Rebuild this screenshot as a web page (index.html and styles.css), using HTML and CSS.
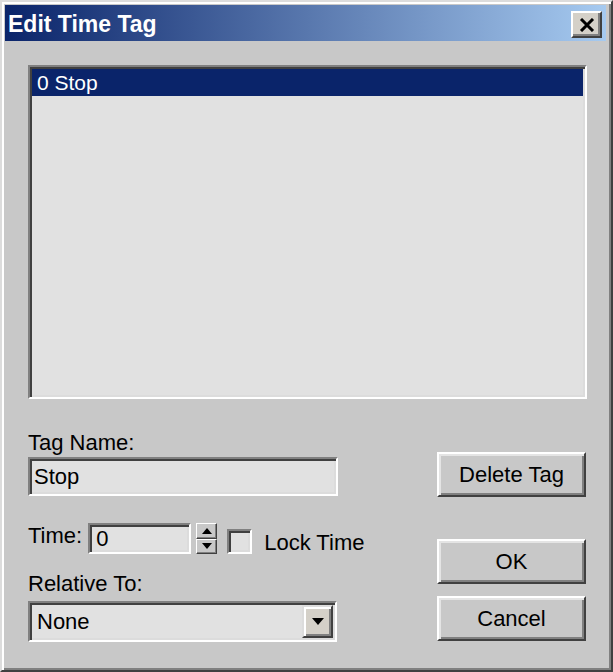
FILE: index.html
```html
<!DOCTYPE html>
<html>
<head>
<meta charset="utf-8">
<link rel="stylesheet" href="styles.css">
</head>
<body>
<div class="window">
  <div class="titlebar">
    <span class="title">Edit Time Tag</span>
    <div class="close">
      <svg width="16" height="14" viewBox="0 0 16 14"><path d="M2 1 L14 13 M14 1 L2 13" stroke="#000" stroke-width="3" fill="none"/></svg>
    </div>
  </div>
  <div class="content">
    <div class="listbox">
      <div class="item selected">0 Stop</div>
    </div>
    <div class="lower">
      <div class="left">
        <div class="label">Tag Name:</div>
        <div class="field name">Stop</div>
        <div class="time-row">
          <span class="label">Time:</span>
          <div class="field time">0</div>
          <div class="spinner">
            <div class="spin"><svg width="10" height="6" viewBox="0 0 10 6"><path d="M5 0 L10 6 L0 6 Z" fill="#000"/></svg></div>
            <div class="spin"><svg width="10" height="6" viewBox="0 0 10 6"><path d="M0 0 L10 0 L5 6 Z" fill="#000"/></svg></div>
          </div>
          <div class="checkbox"></div>
          <span class="label lock">Lock Time</span>
        </div>
        <div class="label rel">Relative To:</div>
        <div class="combo">
          <span class="combo-text">None</span>
          <div class="drop"><svg width="12" height="7" viewBox="0 0 12 7"><path d="M0 0 L12 0 L6 7 Z" fill="#000"/></svg></div>
        </div>
      </div>
      <div class="right">
        <div class="btn del">Delete Tag</div>
        <div class="btn ok">OK</div>
        <div class="btn cancel">Cancel</div>
      </div>
    </div>
  </div>
</div>
</body>
</html>
```

FILE: styles.css
```css
html, body {
  margin: 0;
  padding: 0;
}
body {
  width: 613px;
  height: 672px;
  overflow: hidden;
  background: #c8c8c8;
  font-family: "Liberation Sans", Arial, sans-serif;
  font-size: 22px;
  color: #000;
}
.window {
  box-sizing: border-box;
  width: 613px;
  height: 672px;
  border: 2px solid;
  border-color: #dcdcdc #404040 #404040 #dcdcdc;
  box-shadow: inset 2px 2px #ffffff, inset -2px -2px #808080;
  padding: 3px 5px 0 3px;
  background: #c8c8c8;
}
.titlebar {
  height: 36px;
  display: flex;
  align-items: center;
  justify-content: space-between;
  background: linear-gradient(to right, #0a246a, #a6caf0);
  padding-left: 3px;
}
.title {
  color: #fff;
  font-weight: bold;
  font-size: 23px;
  line-height: 25px;
  padding-top: 2px;
}
.close {
  box-sizing: border-box;
  width: 31px;
  height: 27px;
  margin-right: 4px;
  margin-top: 3px;
  background: #d4d0c8;
  border: 2px solid;
  border-color: #ffffff #404040 #404040 #ffffff;
  box-shadow: inset -2px -2px #808080;
  display: flex;
  align-items: center;
  justify-content: center;
}
.content {
  padding-left: 23px;
  padding-top: 24px;
}
.listbox {
  box-sizing: border-box;
  width: 559px;
  height: 334px;
  border: 2px solid;
  border-color: #808080 #ffffff #ffffff #808080;
  box-shadow: inset 2px 2px #404040, inset -2px -2px #dcdcdc;
  background: #e1e1e1;
  padding: 2px;
}
.item {
  height: 27px;
  line-height: 27px;
  font-size: 21px;
  padding-left: 5px;
}
.item.selected {
  background: #0a246a;
  color: #fff;
}
.lower {
  display: flex;
}
.left {
  width: 310px;
  flex-shrink: 0;
  padding-top: 31px;
  display: flex;
  flex-direction: column;
}
.label {
  line-height: 25px;
  height: 25px;
  white-space: nowrap;
  flex-shrink: 0;
}
.field {
  box-sizing: border-box;
  border: 2px solid;
  border-color: #808080 #ffffff #ffffff #808080;
  box-shadow: inset 2px 2px #404040, inset -2px -2px #dcdcdc;
  background: #e1e1e1;
  padding-left: 4px;
  flex-shrink: 0;
}
.field.name {
  margin-top: 2px;
  width: 310px;
  height: 39px;
  line-height: 35px;
}
.time-row {
  margin-top: 27px;
  height: 32px;
  width: 310px;
  display: flex;
  align-items: flex-start;
  overflow: visible;
}
.field.time {
  margin-left: 6px;
  width: 103px;
  height: 31px;
  line-height: 27px;
  padding-left: 6px;
}
.spinner {
  margin-left: 5px;
  width: 21px;
  height: 31px;
  display: flex;
  flex-direction: column;
  flex-shrink: 0;
}
.spin {
  box-sizing: border-box;
  height: 15.5px;
  border: 1px solid;
  border-color: #ffffff #404040 #404040 #ffffff;
  box-shadow: inset -1px -1px #808080;
  background: #c8c8c8;
  display: flex;
  align-items: center;
  justify-content: center;
}
.checkbox {
  box-sizing: border-box;
  margin-left: 10px;
  margin-top: 6px;
  width: 25px;
  height: 25px;
  flex-shrink: 0;
  border: 2px solid;
  border-color: #808080 #ffffff #ffffff #808080;
  box-shadow: inset 2px 2px #404040, inset -2px -2px #dcdcdc;
  background: #e1e1e1;
}
.lock {
  margin-left: 12px;
  margin-top: 7px;
}
.rel {
  margin-top: 16px;
}
.combo {
  box-sizing: border-box;
  margin-top: 5px;
  width: 309px;
  height: 41px;
  border: 2px solid;
  border-color: #808080 #ffffff #ffffff #808080;
  box-shadow: inset 2px 2px #404040, inset -2px -2px #dcdcdc;
  background: #e1e1e1;
  display: flex;
  align-items: center;
  justify-content: space-between;
  padding: 2px;
}
.combo-text {
  padding-left: 5px;
  line-height: 25px;
}
.drop {
  box-sizing: border-box;
  width: 31px;
  height: 33px;
  background: #d4d0c8;
  border: 2px solid;
  border-color: #dcdcdc #404040 #404040 #dcdcdc;
  box-shadow: inset 2px 2px #ffffff, inset -2px -2px #808080;
  display: flex;
  align-items: center;
  justify-content: center;
}
.right {
  margin-left: 99px;
  width: 149px;
  flex-shrink: 0;
  display: flex;
  flex-direction: column;
}
.btn {
  box-sizing: border-box;
  width: 149px;
  height: 45px;
  border: 2px solid;
  border-color: #ffffff #404040 #404040 #ffffff;
  box-shadow: inset 2px 2px #e4e4e4, inset -2px -2px #808080;
  background: #c8c8c8;
  display: flex;
  align-items: center;
  justify-content: center;
  line-height: 25px;
}
.btn.del {
  margin-top: 53px;
}
.btn.ok {
  margin-top: 42px;
}
.btn.cancel {
  margin-top: 12px;
}
```
